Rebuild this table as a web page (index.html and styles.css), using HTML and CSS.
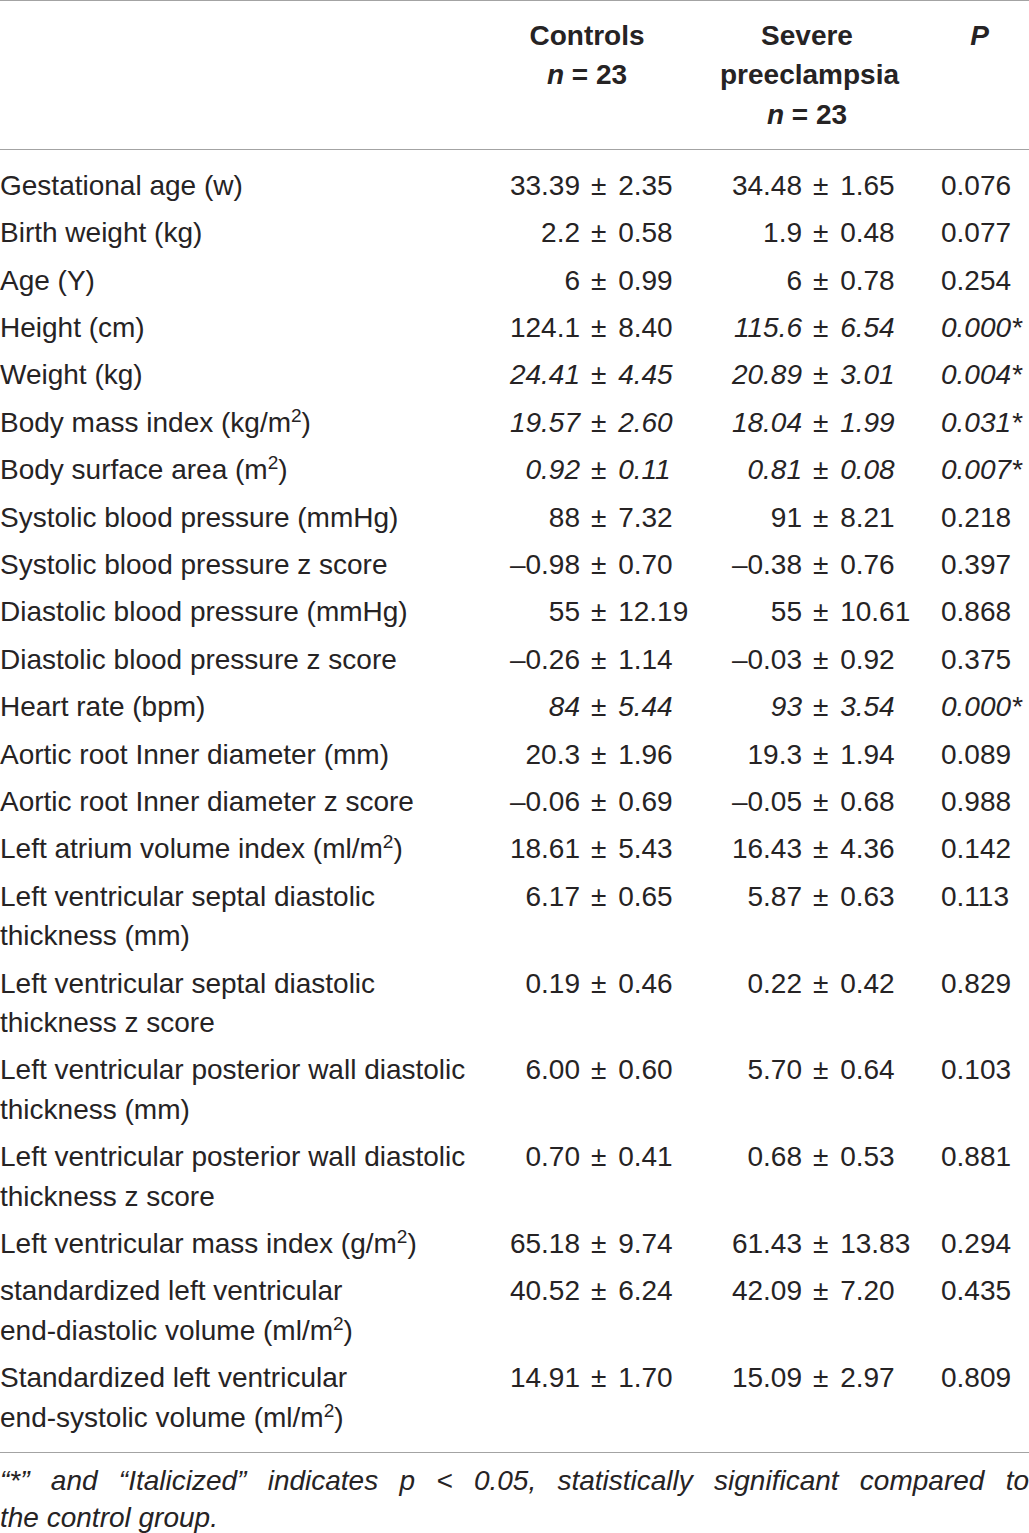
FILE: index.html
```html
<!DOCTYPE html>
<html lang="en">
<head>
<meta charset="utf-8">
<title>Table</title>
<link rel="stylesheet" href="styles.css">
</head>
<body>
<div class="wrap">
<table class="data">
  <colgroup>
    <col class="c-label">
    <col class="c-mean1">
    <col class="c-sd1">
    <col class="c-mean2">
    <col class="c-sd2">
    <col class="c-p">
  </colgroup>
  <thead>
    <tr>
      <th class="h-label"></th>
      <th class="h-group" colspan="2">Controls<br><i>n</i> = 23</th>
      <th class="h-group" colspan="2">Severe<br>preeclampsia<br><i>n</i> = 23</th>
      <th class="h-p"><i>P</i></th>
    </tr>
  </thead>
  <tbody>
    <tr><td class="lbl">Gestational age (w)</td><td class="mean">33.39</td><td class="sd">± 2.35</td><td class="mean">34.48</td><td class="sd">± 1.65</td><td class="pv">0.076</td></tr>
    <tr><td class="lbl">Birth weight (kg)</td><td class="mean">2.2</td><td class="sd">± 0.58</td><td class="mean">1.9</td><td class="sd">± 0.48</td><td class="pv">0.077</td></tr>
    <tr><td class="lbl">Age (Y)</td><td class="mean">6</td><td class="sd">± 0.99</td><td class="mean">6</td><td class="sd">± 0.78</td><td class="pv">0.254</td></tr>
    <tr><td class="lbl">Height (cm)</td><td class="mean">124.1</td><td class="sd">± 8.40</td><td class="mean sig">115.6</td><td class="sd sig">± 6.54</td><td class="pv sig">0.000*</td></tr>
    <tr><td class="lbl">Weight (kg)</td><td class="mean sig">24.41</td><td class="sd sig">± 4.45</td><td class="mean sig">20.89</td><td class="sd sig">± 3.01</td><td class="pv sig">0.004*</td></tr>
    <tr><td class="lbl">Body mass index (kg/m<sup>2</sup>)</td><td class="mean sig">19.57</td><td class="sd sig">± 2.60</td><td class="mean sig">18.04</td><td class="sd sig">± 1.99</td><td class="pv sig">0.031*</td></tr>
    <tr><td class="lbl">Body surface area (m<sup>2</sup>)</td><td class="mean sig">0.92</td><td class="sd sig">± 0.11</td><td class="mean sig">0.81</td><td class="sd sig">± 0.08</td><td class="pv sig">0.007*</td></tr>
    <tr><td class="lbl">Systolic blood pressure (mmHg)</td><td class="mean">88</td><td class="sd">± 7.32</td><td class="mean">91</td><td class="sd">± 8.21</td><td class="pv">0.218</td></tr>
    <tr><td class="lbl">Systolic blood pressure z score</td><td class="mean">–0.98</td><td class="sd">± 0.70</td><td class="mean">–0.38</td><td class="sd">± 0.76</td><td class="pv">0.397</td></tr>
    <tr><td class="lbl">Diastolic blood pressure (mmHg)</td><td class="mean">55</td><td class="sd">± 12.19</td><td class="mean">55</td><td class="sd">± 10.61</td><td class="pv">0.868</td></tr>
    <tr><td class="lbl">Diastolic blood pressure z score</td><td class="mean">–0.26</td><td class="sd">± 1.14</td><td class="mean">–0.03</td><td class="sd">± 0.92</td><td class="pv">0.375</td></tr>
    <tr><td class="lbl">Heart rate (bpm)</td><td class="mean sig">84</td><td class="sd sig">± 5.44</td><td class="mean sig">93</td><td class="sd sig">± 3.54</td><td class="pv sig">0.000*</td></tr>
    <tr><td class="lbl">Aortic root Inner diameter (mm)</td><td class="mean">20.3</td><td class="sd">± 1.96</td><td class="mean">19.3</td><td class="sd">± 1.94</td><td class="pv">0.089</td></tr>
    <tr><td class="lbl">Aortic root Inner diameter z score</td><td class="mean">–0.06</td><td class="sd">± 0.69</td><td class="mean">–0.05</td><td class="sd">± 0.68</td><td class="pv">0.988</td></tr>
    <tr><td class="lbl">Left atrium volume index (ml/m<sup>2</sup>)</td><td class="mean">18.61</td><td class="sd">± 5.43</td><td class="mean">16.43</td><td class="sd">± 4.36</td><td class="pv">0.142</td></tr>
    <tr><td class="lbl">Left ventricular septal diastolic thickness (mm)</td><td class="mean">6.17</td><td class="sd">± 0.65</td><td class="mean">5.87</td><td class="sd">± 0.63</td><td class="pv">0.113</td></tr>
    <tr><td class="lbl">Left ventricular septal diastolic thickness z score</td><td class="mean">0.19</td><td class="sd">± 0.46</td><td class="mean">0.22</td><td class="sd">± 0.42</td><td class="pv">0.829</td></tr>
    <tr><td class="lbl">Left ventricular posterior wall diastolic thickness (mm)</td><td class="mean">6.00</td><td class="sd">± 0.60</td><td class="mean">5.70</td><td class="sd">± 0.64</td><td class="pv">0.103</td></tr>
    <tr><td class="lbl">Left ventricular posterior wall diastolic thickness z score</td><td class="mean">0.70</td><td class="sd">± 0.41</td><td class="mean">0.68</td><td class="sd">± 0.53</td><td class="pv">0.881</td></tr>
    <tr><td class="lbl">Left ventricular mass index (g/m<sup>2</sup>)</td><td class="mean">65.18</td><td class="sd">± 9.74</td><td class="mean">61.43</td><td class="sd">± 13.83</td><td class="pv">0.294</td></tr>
    <tr><td class="lbl">standardized left ventricular<br>end-diastolic volume (ml/m<sup>2</sup>)</td><td class="mean">40.52</td><td class="sd">± 6.24</td><td class="mean">42.09</td><td class="sd">± 7.20</td><td class="pv">0.435</td></tr>
    <tr><td class="lbl">Standardized left ventricular<br>end-systolic volume (ml/m<sup>2</sup>)</td><td class="mean">14.91</td><td class="sd">± 1.70</td><td class="mean">15.09</td><td class="sd">± 2.97</td><td class="pv">0.809</td></tr>
  </tbody>
</table>
<p class="note"><span class="note-lead">“*” and “Italicized” indicates p &lt; 0.05, statistically significant compared to</span> the control group.</p>
</div>
</body>
</html>
```

FILE: styles.css
```css
html, body {
  margin: 0;
  padding: 0;
  background: #ffffff;
}

body {
  font-family: "Liberation Sans", Arial, Helvetica, sans-serif;
  color: #262324;
  font-size: 28px;
  line-height: 39.4px;
}

.wrap {
  width: 1029px;
}

.data {
  width: 1029px;
  table-layout: fixed;
  border-collapse: collapse;
  border-spacing: 0;
}

.c-label { width: 490px; }
.c-mean1 { width: 101px; }
.c-sd1 { width: 129px; }
.c-mean2 { width: 93px; }
.c-sd2 { width: 117px; }
.c-p { width: 99px; }

.data thead tr {
  border-top: 1px solid #a3a3a3;
  border-bottom: 1px solid #a3a3a3;
}

.data th {
  font-weight: bold;
  vertical-align: top;
  padding: 15px 0 15px 0;
}

.data th.h-group {
  text-align: center;
  padding-right: 36px;
}

.data th.h-p {
  text-align: center;
}

.data tbody tr:last-child {
  border-bottom: 1px solid #a3a3a3;
}

.data td {
  vertical-align: top;
  padding: 4px 0;
  white-space: nowrap;
}

.data tbody tr:first-child td {
  padding-top: 15.5px;
}

.data tbody tr:last-child td {
  padding-bottom: 14.5px;
}

.data td.lbl {
  white-space: normal;
  text-align: left;
  padding-right: 12px;
}

.data td.mean {
  text-align: right;
  padding-right: 11px;
}

.data td.sd {
  text-align: left;
  word-spacing: 4px;
}

.data td.pv {
  text-align: left;
  padding-left: 11px;
}

.sig {
  font-style: italic;
}

sup {
  font-size: 0.68em;
  line-height: 0;
  vertical-align: 0.5em;
}

.note {
  margin: 9px 0 0 0;
  font-style: italic;
  text-align: justify;
  line-height: 37px;
}

.note-lead {
  word-spacing: 10px;
}
```
